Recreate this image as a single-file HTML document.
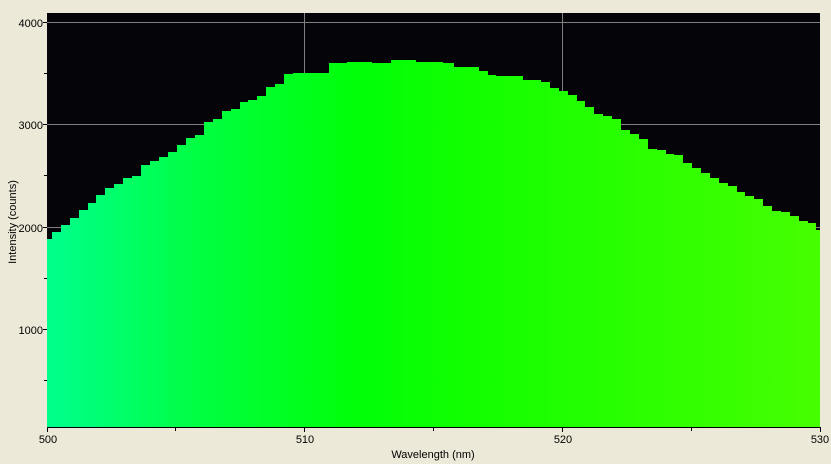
<!DOCTYPE html>
<html><head><meta charset="utf-8"><style>
html,body{margin:0;padding:0;background:#ece9d8;}
svg{display:block;}
text{font-family:"Liberation Sans",sans-serif;font-size:11px;fill:#000;}
</style></head><body>
<svg width="831" height="464" viewBox="0 0 831 464" xmlns="http://www.w3.org/2000/svg">
<defs>
<linearGradient id="g" x1="47" y1="0" x2="820" y2="0" gradientUnits="userSpaceOnUse">
<stop offset="0" stop-color="#00ff8c"/>
<stop offset="0.2" stop-color="#00ff40"/>
<stop offset="0.4" stop-color="#00ff08"/>
<stop offset="0.55" stop-color="#12ff00"/>
<stop offset="1" stop-color="#46ff00"/>
</linearGradient>
</defs>
<rect x="47" y="13" width="773" height="415" fill="#050509"/>
<g stroke="#808080" stroke-width="1">
<line x1="47" y1="22.5" x2="820" y2="22.5"/>
<line x1="47" y1="124.5" x2="820" y2="124.5"/>
<line x1="47" y1="227.5" x2="820" y2="227.5"/>
<line x1="304.5" y1="13" x2="304.5" y2="428"/>
<line x1="562.5" y1="13" x2="562.5" y2="428"/>
</g>
<path fill="url(#g)" d="M47,428 V239 H52 V232 H61 V225 H70 V218 H79 V210 H88 V203 H96 V195 H105 V188 H114 V184 H123 V178 H132 V176 H141 V165 H150 V161 H159 V157 H168 V152 H177 V145 H186 V138 H195 V135 H204 V122 H213 V119 H222 V111 H231 V109 H240 V102 H248 V100 H257 V96 H266 V87 H275 V84 H284 V74 H293 V73 H329 V63 H347 V62 H372 V63 H391 V60 H416 V62 H443 V63 H454 V67 H479 V71 H488 V75 H496 V76 H523 V80 H541 V82 H550 V88 H559 V91 H568 V95 H577 V101 H585 V107 H594 V114 H603 V116 H612 V119 H621 V130 H630 V134 H639 V139 H648 V149 H657 V150 H666 V154 H674 V155 H683 V163 H692 V168 H701 V173 H710 V178 H719 V183 H728 V186 H737 V192 H745 V196 H754 V199 H763 V206 H772 V211 H781 V212 H790 V216 H799 V221 H808 V223 H816 V230 H820 V428 Z"/>
<g stroke="#000" stroke-width="1">
<line x1="47" y1="427.5" x2="821" y2="427.5"/>
<line x1="47.5" y1="428" x2="47.5" y2="432"/>
<line x1="175.5" y1="428" x2="175.5" y2="431"/>
<line x1="304.5" y1="428" x2="304.5" y2="432"/>
<line x1="433.5" y1="428" x2="433.5" y2="431"/>
<line x1="562.5" y1="428" x2="562.5" y2="432"/>
<line x1="691.5" y1="428" x2="691.5" y2="431"/>
<line x1="820.5" y1="428" x2="820.5" y2="432"/>
<line x1="43" y1="22.5" x2="47" y2="22.5"/>
<line x1="44" y1="73.5" x2="47" y2="73.5"/>
<line x1="43" y1="124.5" x2="47" y2="124.5"/>
<line x1="44" y1="175.5" x2="47" y2="175.5"/>
<line x1="43" y1="227.5" x2="47" y2="227.5"/>
<line x1="44" y1="278.5" x2="47" y2="278.5"/>
<line x1="43" y1="329.5" x2="47" y2="329.5"/>
<line x1="44" y1="380.5" x2="47" y2="380.5"/>
</g>
<g text-anchor="end">
<text x="43" y="27">4000</text>
<text x="43" y="129">3000</text>
<text x="43" y="232">2000</text>
<text x="43" y="334">1000</text>
</g>
<g text-anchor="middle">
<text x="48" y="443">500</text>
<text x="305" y="443">510</text>
<text x="563" y="443">520</text>
<text x="820" y="443">530</text>
<text x="433" y="458">Wavelength (nm)</text>
<text transform="translate(16,222) rotate(-90)">Intensity (counts)</text>
</g>
</svg>
</body></html>
